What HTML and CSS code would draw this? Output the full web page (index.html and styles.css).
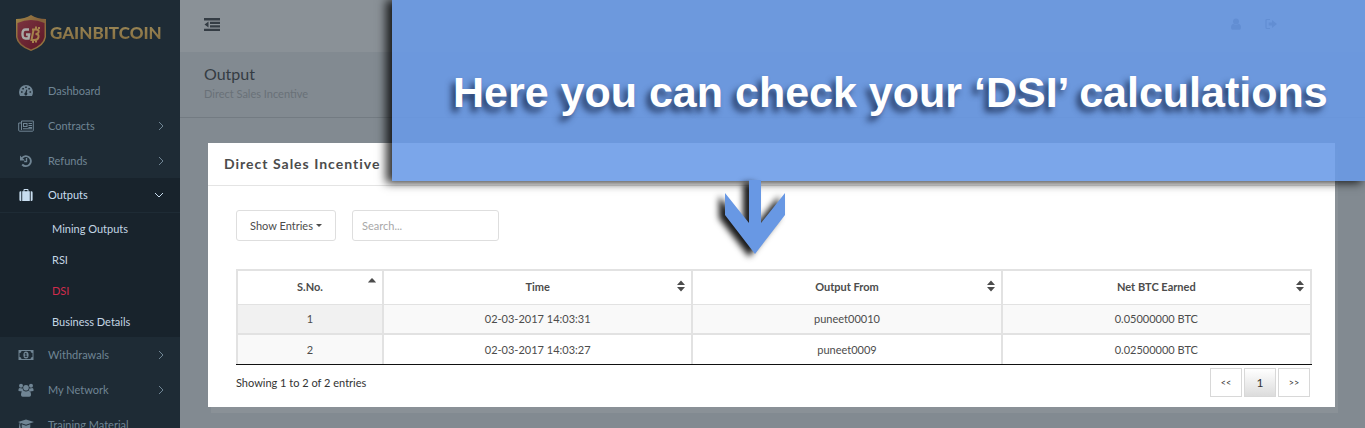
FILE: index.html
```html
<!DOCTYPE html>
<html lang="en">
<head>
<meta charset="utf-8">
<title>Output - Direct Sales Incentive</title>
<link rel="stylesheet" href="styles.css">
</head>
<body>
<div class="app">
  <aside class="sidebar">
    <a class="brand" href="#">
      <svg class="brand-shield" viewBox="0 0 30 36" aria-hidden="true">
        <defs>
          <linearGradient id="gold" x1="0" y1="0" x2="1" y2="1"><stop offset="0" stop-color="#a08648"/><stop offset=".5" stop-color="#84603a"/><stop offset="1" stop-color="#987c40"/></linearGradient>
          <linearGradient id="red" x1="0" y1="0" x2="1" y2="1"><stop offset="0" stop-color="#7b3440"/><stop offset="1" stop-color="#5d1726"/></linearGradient>
        </defs>
        <path d="M0 4Q9 4 15 0Q21 4 30 4V22Q29 31 15 36Q1 31 0 22Z" fill="url(#gold)"/>
        <path d="M1.500 8Q15 2 28.500 8V22Q27 30 15 34.500Q3 30 1.500 22Z" fill="url(#red)"/>
        <g fill="none" stroke-width="2.400">
          <path d="M13 14.500H9.500Q6.500 14.500 6.500 19Q6.500 23.500 9.500 23.500H12.500L13.200 19.500H10" stroke="#a9a9a6"/>
          <path d="M16 14.500H20Q23.500 14.500 22.500 17.500Q22 19 19.500 19Q23 19 22.500 22Q22 25 18 25H15.500L17.500 15M20 11.500V14M17 25V28M23 12V14M20 25V27.500" stroke="#a6824c" stroke-width="2"/>
        </g>
      </svg>
      <span class="brand-name">GAINBITCOIN</span>
    </a>
    <nav class="menu" aria-label="Main">
      <a class="item" href="#">
        <svg class="icon" viewBox="0 0 14 14"><path fill-rule="evenodd" d="M0 8a7 7 0 1 1 14 0q0 2.200-1 4H1Q0 10.200 0 8ZM2 7.200v1.600h1.600V7.200ZM3.300 4v1.600h1.600V4ZM6.200 2.500v1.600h1.600V2.500ZM9.300 4v1.600h1.600V4ZM10.500 7.200v1.600h1.600V7.200ZM7.400 5.500L6.300 8.500a1.500 1.500 0 1 0 1.500 0.200L8.300 5.700Z"/></svg>
        <span>Dashboard</span>
      </a>
      <a class="item" href="#">
        <svg class="icon" viewBox="0 0 16 14"><path d="M3.500 2h11.800v9.500q0 .7-.7.7H1.700q-1 0-1-1V4h2.500M3.500 2v9" fill="none" stroke="currentColor"/><path fill-rule="evenodd" d="M5 4h4.500v4H5Zm1 1v2h2.500V5ZM10.500 4H14v1h-3.500ZM10.500 6H14v1h-3.500ZM10.500 8H14v1h-3.500ZM5 9.300h9v1H5Z"/></svg>
        <span>Contracts</span>
        <svg class="chev" viewBox="0 0 6 10"><path d="M1 1l4 4-4 4"/></svg>
      </a>
      <a class="item" href="#">
        <svg class="icon" viewBox="0 0 14 14"><path d="M3 4A5 5 0 1 1 3.200 10.500" fill="none" stroke="currentColor" stroke-width="1.900"/><path d="M1 1.500V6.500H6ZM6.800 4H8.200V8.200H5.200V7H6.800Z"/></svg>
        <span>Refunds</span>
        <svg class="chev" viewBox="0 0 6 10"><path d="M1 1l4 4-4 4"/></svg>
      </a>
      <a class="item item-open" href="#">
        <svg class="icon" viewBox="0 0 14 14"><path fill-rule="evenodd" d="M3.200 3.200h1.300V2q0-.9.900-.9h3.200q.9 0 .9.900v1.200h1.300v9.800H3.200ZM5.500 2.100v1.100h3V2.100ZM.4 4.500q0-1.300 1.200-1.300h.7V13h-.7Q.4 13 .4 11.700ZM11.700 3.200h.7q1.200 0 1.200 1.300v7.200q0 1.300-1.200 1.300h-.7Z"/></svg>
        <span>Outputs</span>
        <svg class="chev chev-down" viewBox="0 0 10 6"><path d="M1 1l4 4 4-4"/></svg>
      </a>
      <div class="submenu">
        <a href="#">Mining Outputs</a>
        <a href="#">RSI</a>
        <a class="current" href="#" aria-current="page">DSI</a>
        <a href="#">Business Details</a>
      </div>
      <a class="item" href="#">
        <svg class="icon" viewBox="0 0 16 14"><path fill-rule="evenodd" d="M.5 2h15v10H.5ZM3.500 3q0 2-2 2v4q2 0 2 2h9q0-2 2-2V5q-2 0-2-2Z"/><path fill-rule="evenodd" d="M8 3.500q2.600 0 2.600 3.500T8 10.500T5.400 7T8 3.500ZM7.500 5L6.600 5.700V6.200H7.400V8.300H6.700V9H9.300V8.300H8.500V5Z"/></svg>
        <span>Withdrawals</span>
        <svg class="chev" viewBox="0 0 6 10"><path d="M1 1l4 4-4 4"/></svg>
      </a>
      <a class="item" href="#">
        <svg class="icon" viewBox="0 0 16 14"><circle cx="3" cy="2.800" r="2"/><circle cx="13" cy="2.800" r="2"/><circle cx="8" cy="4.700" r="2.800"/><path d="M.5 8V6.500Q.5 5 1.700 5q2.400.8 3 .3Q4.700 7 5.500 7.800L4 8.500ZM15.500 8V6.500Q15.500 5 14.300 5q-2.400.8-3 .3Q11.300 7 10.500 7.800L12 8.500ZM5.300 7.500Q8 9.500 10.700 7.500Q13 8 13 12q0 1.700-1.700 1.700H4.700Q3 13.700 3 12Q3 8 5.300 7.500Z"/></svg>
        <span>My Network</span>
        <svg class="chev" viewBox="0 0 6 10"><path d="M1 1l4 4-4 4"/></svg>
      </a>
      <a class="item" href="#">
        <svg class="icon" viewBox="0 0 16 14"><path d="M8 1.500l8 2.500-8 2.700L2.800 5q-.6.700-.6 2l.7 4H.7l.6-4q0-1.500.6-2.300L0 4ZM3.700 6.300L8 7.800l4.300-1.500v3q-1 1.700-4.300 1.700T3.700 9.300Z"/></svg>
        <span>Training Material</span>
      </a>
    </nav>
  </aside>
  <div class="main">
    <header class="topbar">
      <button class="icon-btn" type="button" aria-label="Collapse menu">
        <svg class="icon-outdent" viewBox="0 0 16 13"><path d="M0 0h16v2.400H0ZM6 3.700h10v2.200H6ZM6 7.300h10v2.200H6ZM0 10.800h16v2.200H0ZM4.500 3.500v6L0.500 6.500Z"/></svg>
      </button>
      <div class="top-actions">
        <button class="icon-btn" type="button" aria-label="Profile"><svg class="icon-small" viewBox="0 0 12 12"><circle cx="6" cy="3.500" r="3"/><path d="M3.300 5.800Q6 8 8.700 5.800Q11 6.300 11 10q0 1.700-1.500 1.700h-7Q1 11.700 1 10Q1 6.300 3.300 5.800Z"/></svg></button>
        <button class="icon-btn" type="button" aria-label="Sign out"><svg class="icon-small" viewBox="0 0 12 12"><path d="M5 1.500H2Q1 1.500 1 2.500v7q0 1 1 1h3" fill="none" stroke="currentColor" stroke-width="1.200"/><path d="M7 2l5 4-5 4V7.500H3.700v-3H7Z"/></svg></button>
      </div>
    </header>
    <div class="page-head">
      <h1>Output</h1>
      <p>Direct Sales Incentive</p>
    </div>
    <main class="content">
      <section class="card">
        <h2>Direct Sales Incentive</h2>
        <div class="card-body">
          <div class="controls">
            <button class="entries" type="button">Show Entries <span class="caret"></span></button>
            <input class="search" type="text" placeholder="Search..." aria-label="Search">
          </div>
          <table class="grid">
            <thead>
              <tr>
                <th class="col-no"><span class="th">S.No.<svg class="sort sort-asc" viewBox="0 0 8 12"><path d="M0 4.500Q0 4 4 0Q8 4 8 4.500Z"/></svg></span></th>
                <th><span class="th">Time<svg class="sort" viewBox="0 0 8 12"><path d="M0 5l4-4.500 4 4.500ZM0 7h8l-4 4.500Z"/></svg></span></th>
                <th><span class="th">Output From<svg class="sort" viewBox="0 0 8 12"><path d="M0 5l4-4.500 4 4.500ZM0 7h8l-4 4.500Z"/></svg></span></th>
                <th><span class="th">Net BTC Earned<svg class="sort" viewBox="0 0 8 12"><path d="M0 5l4-4.500 4 4.500ZM0 7h8l-4 4.500Z"/></svg></span></th>
              </tr>
            </thead>
            <tbody>
              <tr><td>1</td><td>02-03-2017 14:03:31</td><td>puneet00010</td><td>0.05000000 BTC</td></tr>
              <tr><td>2</td><td>02-03-2017 14:03:27</td><td>puneet0009</td><td>0.02500000 BTC</td></tr>
            </tbody>
          </table>
          <div class="table-foot">
            <p>Showing 1 to 2 of 2 entries</p>
            <div class="pager">
              <button type="button" aria-label="Previous">&lt;&lt;</button>
              <button class="on" type="button">1</button>
              <button type="button" aria-label="Next">&gt;&gt;</button>
            </div>
          </div>
        </div>
      </section>
    </main>
    <div class="callout">
      <p>Here you can check your ‘DSI’ calculations</p>
      <svg class="arrow" viewBox="0 0 60 74" aria-hidden="true"><path d="M24 0H36V43L60 13V35L30 74L0 35V13L24 43Z"/></svg>
    </div>
  </div>
</div>
</body>
</html>
```

FILE: styles.css
```css
* { box-sizing: border-box; }
body { margin: 0; font: 11px/16px Lato, "Liberation Sans", sans-serif; color: #4c4c4c; }
h1, h2, p { margin: 0; font-weight: 400; }
a { color: inherit; text-decoration: none; }
button, input { font: inherit; color: inherit; }
svg { fill: currentColor; flex: none; }

.app { display: flex; height: 100vh; overflow: hidden; background: #828a91; }

.sidebar { flex: none; width: 180px; background: #1e2b35; color: #708594; }
.brand { display: flex; align-items: center; gap: 4px; height: 73px; padding: 0 0 7px 16px; }
.brand-shield { width: 30px; height: 36px; }
.brand-name {
  font-size: 17px; line-height: 24px; font-weight: 900;
  background: linear-gradient(#a08d5c, #80683a);
  -webkit-background-clip: text; background-clip: text; color: transparent;
}
.item { display: flex; align-items: center; height: 35px; padding: 0 16px 0 18px; }
.item span { flex: 1; padding-left: 14px; white-space: nowrap; }
.icon { width: 16px; height: 14px; }
.chev { width: 6px; height: 10px; fill: none; stroke: currentColor; stroke-width: 1; }
.chev-down { width: 10px; height: 6px; }
.item-open { background: #18232c; color: #c9def0; border-bottom: 1px solid #1e2b35; }
.submenu { background: #18232c; color: #c4d6e4; }
.submenu a { display: flex; align-items: center; height: 31px; padding-left: 52px; }
.submenu .current { color: #d02c4c; }

.main { position: relative; flex: 1; min-width: 0; }
.topbar { display: flex; align-items: center; justify-content: space-between; height: 52px; padding: 0 88px 4px 24px; background: #8a9197; }
.icon-btn { display: flex; padding: 0; border: 0; background: none; color: #343c44; }
.icon-outdent { width: 16px; height: 13px; }
.icon-small { width: 12px; height: 12px; }
.top-actions { display: flex; gap: 23px; }
.page-head { height: 66px; padding: 12px 24px 0; border-bottom: 1px solid #737b82; }
.page-head h1 { font-size: 16px; line-height: 20px; color: #353c43; }
.page-head p { line-height: 20px; color: #697178; }
.content { padding: 25px 30px 21px 28px; }

.card { background: #fff; box-shadow: 3px 6px 0 #8a9197; }
.card h2 { padding: 11px 16px; border-bottom: 1px solid #e4e4e4; font-size: 14px; line-height: 20px; font-weight: 700; letter-spacing: 1px; }
.card-body { padding: 24px 23px 10px 28px; }
.controls { display: flex; gap: 16px; margin-bottom: 28px; }
.entries, .search { height: 31px; border: 1px solid #dedede; border-radius: 3px; background: #fff; }
.entries { display: flex; align-items: center; justify-content: center; gap: 3px; width: 100px; padding: 0; }
.caret { border: 3px solid transparent; border-top-color: currentColor; border-bottom: 0; }
.search { width: 147px; padding: 0 9px; }
.search::placeholder { color: #a8a8a8; opacity: 1; }

.grid { width: 100%; border-collapse: collapse; table-layout: fixed; text-align: center; }
.grid th, .grid td { padding: 0; border: 2px solid #e2e2e2; }
.grid th { height: 34px; border-bottom-width: 1px; font-weight: 700; }
.grid td { height: 30px; }
.grid tbody tr:first-child td { border-top-width: 1px; background: #f9f9f9; }
.grid tbody tr:first-child td:first-child { background: #f1f1f1; }
.grid tbody tr:last-child td { border-bottom: 0; }
.grid tbody tr:last-child td:first-child { background: #f9f9f9; }
.col-no { width: 146px; }
.th { position: relative; display: block; }
.sort { position: absolute; right: 6px; top: 1px; width: 8px; height: 12px; }
.sort-asc { top: -1px; }

.table-foot { display: flex; justify-content: space-between; align-items: center; padding-top: 3px; border-top: 1px solid #111; color: #333; }
.pager { display: flex; gap: 2px; padding-right: 2px; }
.pager button { width: 32px; height: 29px; padding: 0; border: 1px solid #d8d8d8; background: #fff; font-size: 9px; }
.pager .on { background: linear-gradient(#fff, #dcdcdc); font-size: 12px; }

.callout {
  position: absolute; top: 0; left: 212px; right: 0; height: 181px;
  display: flex; align-items: center; padding: 3px 0 0 61px;
  background: rgba(105, 154, 231, .88);
  box-shadow: -5px 1px 9px 1px rgba(0, 0, 0, .8);
}
.callout p {
  color: #fff; font: 700 43px/48px "Liberation Sans", Arial, sans-serif; white-space: nowrap;
  text-shadow: -4px 5px 6px rgba(20, 35, 70, .8);
}
.arrow { position: absolute; left: 333px; top: 180px; width: 60px; height: 74px; fill: #6898e4; filter: drop-shadow(-6px 3px 3px rgba(0, 0, 0, .9)); }
```
